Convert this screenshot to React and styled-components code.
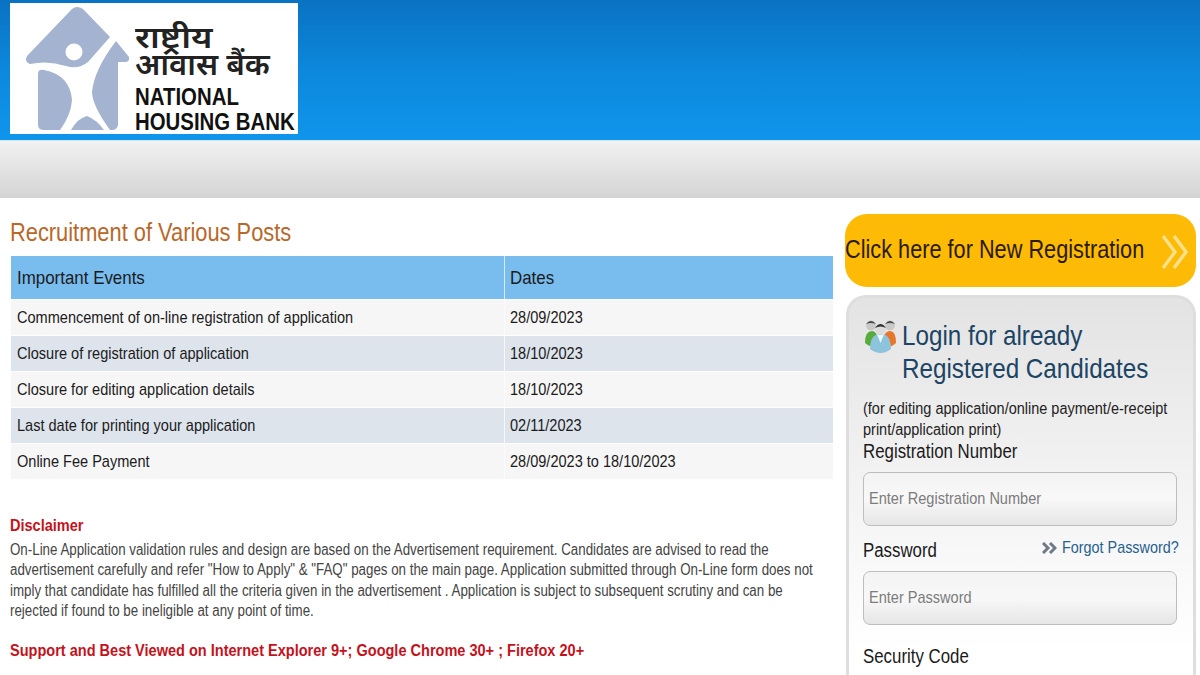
import React from "react";
import styled, { createGlobalStyle, css } from "styled-components";

const squeeze = (r) => css`
  white-space: nowrap; transform: scaleX(${r}); transform-origin: left center;
`;

const Global = createGlobalStyle`
  html, body { margin: 0; padding: 0; height: 675px; overflow: hidden; background: #fff; }
  body { font-family: "Liberation Sans", Arial, sans-serif; }
`;
const Page = styled.div`width: 1200px; height: 675px; overflow: hidden;`;
const Header = styled.header`
  height: 140px; box-sizing: border-box; padding: 3px 0 0 10px;
  background: linear-gradient(180deg, #0a72c2 0%, #0c88dc 50%, #0f95ec 100%);
`;
const LogoBox = styled.div`
  position: relative; width: 288px; height: 131px; background: #fff;
`;
const LogoMark = styled.svg`position: absolute; left: 0; top: 0;`;
const Hindi = styled.div`
  position: absolute; left: 125px; top: ${p => p.$top}px;
  font-family: "Noto Sans", "Noto Sans CJK SC", "DejaVu Sans", sans-serif; font-weight: 600;
  font-size: 31px; line-height: 27px; color: #222; ${p => squeeze(p.$r)}
`;
const LogoEn = styled.div`
  position: absolute; left: 125px; top: 81px; font-size: 24px; line-height: 25px; font-weight: 700;
  color: #111; ${squeeze(0.85)}
`;
const Band = styled.div`height: 58px; background: linear-gradient(180deg, #f1f1f1 0%, #d4d4d4 100%); border-top: 1px solid #cfe6f8; box-sizing: border-box;`;
const Main = styled.main`display: flex; height: 477px; overflow: hidden;`;
const Left = styled.section`width: 823px; margin-left: 10px; padding-top: 18px; box-sizing: border-box;`;
const Title = styled.h1`
  margin: 0; font-size: 26px; line-height: 32px; font-weight: 400; color: #b8682a; ${squeeze(0.84)}
`;
const Table = styled.div`margin: 8px 0 0 1px; width: 822px;`;
const Row = styled.div`
  display: grid; grid-template-columns: 492px 1fr; column-gap: 1px;
  height: ${p => p.$head ? 43 : 35}px; margin-bottom: 1px;
  background: ${p => p.$head ? "#79bcee" : p.$alt ? "#dde4ec" : "#f6f6f6"};
`;
const Cell = styled.div`
  display: flex; align-items: center; padding-left: ${p => p.$second ? 5 : 6}px; color: #1b1b1b;
  ${p => p.$head ? "background: #79bcee;" : ""}
  border-left: ${p => p.$second ? "1px solid rgba(255,255,255,.7)" : "none"};
`;
const CellText = styled.span`
  font-size: ${p => p.$head ? 19 : 17}px; ${p => squeeze(p.$head ? 0.89 : 0.855)}
`;
const Disclaimer = styled.div`margin-top: 37px;`;
const RedHead = styled.div`
  color: #c4121c; font-weight: 700; font-size: 16px; line-height: 20px; ${squeeze(0.908)}
`;
const Body = styled.p`
  margin: 4px 0 0; color: #444; font-size: 16px; line-height: 20.4px; ${squeeze(0.833)}
`;
const Support = styled(RedHead)`margin-top: 19px;`;
const Right = styled.aside`width: 351px; margin-left: 12px; padding-top: 16px; box-sizing: border-box;`;
const RegButton = styled.div`
  height: 73px; box-sizing: border-box; border-radius: 22px; background: #fdbb05; display: flex; align-items: center;
  padding: 0 8px 2px 0;
  svg { flex-shrink: 0; margin-top: 4px; }
`;
const RegLabel = styled.span`flex: 1; min-width: 0; font-size: 26px; color: #2a1a00; ${squeeze(0.835)}`;
const Panel = styled.div`
  margin-top: 8px; margin-left: 1px; height: 420px; box-sizing: border-box; border: 3px solid #dedede; border-bottom: none; border-radius: 20px 20px 0 0;
  padding: 21px 16px 0 14px;
  background: linear-gradient(180deg, #e3e3e3 0%, #f3f3f3 45%, #fff 85%);
`;
const LoginHead = styled.div`
  display: flex; gap: 5px; align-items: flex-start;
  svg { flex-shrink: 0; margin-left: 1px; }
`;
const LoginTitle = styled.h2`
  flex: 1; min-width: 0; margin: 0; font-size: 28px; line-height: 33px; font-weight: 400; color: #1c4464; ${squeeze(0.865)}
`;
const Note = styled.div`
  margin-top: 14px; font-size: 16px; line-height: 20.5px; color: #222; ${squeeze(0.905)}
`;
const Label = styled.div`
  font-size: 20px; line-height: 24px; color: #1a1a1a; margin-top: ${p => p.$top || 0}px; ${squeeze(0.842)}
`;
const Input = styled.div`
  margin-top: ${p => p.$top}px; width: 314px; height: 54px; box-sizing: border-box; border: 1px solid #bdbdbd; border-radius: 7px;
  background: linear-gradient(180deg, #f3f3f3 0%, #f8f8f8 50%, #e6e6e6 100%);
  display: flex; align-items: center; padding-left: 5px;
`;
const Placeholder = styled.span`color: #7c7c7c; font-size: 17px; ${squeeze(0.855)}`;
const PassRow = styled.div`display: flex; justify-content: space-between; align-items: center; margin-top: 12px; width: 317px;`;
const Forgot = styled.div`
  display: flex; align-items: center; gap: 5px; margin-top: -4px; width: 138px;
  svg { flex-shrink: 0; }
`;
const ForgotLabel = styled.span`flex: 1; min-width: 0; color: #27618e; font-size: 17px; ${squeeze(0.846)}`;

const Logo = () => (
  <LogoBox>
    <LogoMark width="288" height="131" viewBox="10 3 288 131">
      <g fill="#a3b3d0">
        <path d="M72 9Q77 5 83 9L110 37L88 62Q78 70 66 66Q48 60 30 64Q24 62 27 56Z" />
        <path d="M116 41L129 57Q130 62 125 62L118 62L118 125Q117 130 112 130L110 130Q92 105 92 92Q94 70 116 41Z" />
        <path d="M38 74Q38 69 44 70Q70 75 72 100Q71 115 60 130L44 130Q38 130 38 125Z" />
        <path d="M71 130Q78 118 87 116Q97 120 104 130Z" />
      </g>
      <circle cx="74" cy="52" r="8.5" fill="#fff" />
    </LogoMark>
    <Hindi $top={20} $r={1.13}>राष्ट्रीय</Hindi>
    <Hindi $top={47} $r={1}>आवास बैंक</Hindi>
    <LogoEn>NATIONAL<br />HOUSING BANK</LogoEn>
  </LogoBox>
);

const BigChevrons = () => (
  <svg width="26" height="34" viewBox="0 0 26 34" fill="none" stroke="#fde08a" strokeWidth="3.4">
    <path d="M1 1L13 17L1 33" /><path d="M12 1L24 17L12 33" />
  </svg>
);

const SmallChevrons = () => (
  <svg width="15" height="12" viewBox="0 0 15 12" fill="none" stroke="#6f7a84" strokeWidth="3">
    <path d="M1 1L6 6L1 11" /><path d="M8 1L13 6L8 11" />
  </svg>
);

const People = () => (
  <svg width="33" height="35" viewBox="0 0 33 35">
    <path d="M1 24Q1 12 8 12Q14 12 14 26Q8 30 1 24Z" fill="#58ab3c" />
    <path d="M19 26Q19 12 26 12Q32 12 32 24Q26 30 19 26Z" fill="#e8762a" />
    <circle cx="7" cy="6.5" r="5" fill="#c9c9c9" /><circle cx="26" cy="6.5" r="5" fill="#c9c9c9" />
    <path d="M2 5Q7 -1 12 5Q7 3 2 5Z" fill="#444" /><path d="M21 5Q26 -1 31 5Q26 3 21 5Z" fill="#444" />
    <circle cx="16.5" cy="10" r="5.5" fill="#dcdcdc" />
    <path d="M11 9Q16.5 1 22 9Q16.5 6 11 9Z" fill="#333" />
    <path d="M6 30Q6 15 16.5 15Q27 15 27 30Q16.5 38 6 30Z" fill="#8cc4dc" />
    <path d="M13 15.5L16.5 24L20 15.5Z" fill="#eef6fa" />
  </svg>
);

const rows = [
  ["Commencement of on-line registration of application", "28/09/2023"],
  ["Closure of registration of application", "18/10/2023"],
  ["Closure for editing application details", "18/10/2023"],
  ["Last date for printing your application", "02/11/2023"],
  ["Online Fee Payment", "28/09/2023 to 18/10/2023"],
];

export default function App() {
  return (
    <Page>
      <Global />
      <Header><Logo /></Header>
      <Band />
      <Main>
        <Left>
          <Title>Recruitment of Various Posts</Title>
          <Table>
            <Row $head>
              <Cell $head><CellText $head>Important Events</CellText></Cell>
              <Cell $head $second><CellText $head>Dates</CellText></Cell>
            </Row>
            {rows.map((r, i) => (
              <Row key={r[0]} $alt={i % 2 === 1}>
                <Cell><CellText>{r[0]}</CellText></Cell>
                <Cell $second><CellText>{r[1]}</CellText></Cell>
              </Row>
            ))}
          </Table>
          <Disclaimer>
            <RedHead>Disclaimer</RedHead>
            <Body>
              On-Line Application validation rules and design are based on the Advertisement requirement. Candidates are advised to read the<br />
              advertisement carefully and refer "How to Apply" &amp; "FAQ" pages on the main page. Application submitted through On-Line form does not<br />
              imply that candidate has fulfilled all the criteria given in the advertisement . Application is subject to subsequent scrutiny and can be<br />
              rejected if found to be ineligible at any point of time.
            </Body>
            <Support>Support and Best Viewed on Internet Explorer 9+; Google Chrome 30+ ; Firefox 20+</Support>
          </Disclaimer>
        </Left>
        <Right>
          <RegButton>
            <RegLabel>Click here for New Registration</RegLabel>
            <BigChevrons />
          </RegButton>
          <Panel>
            <LoginHead>
              <People />
              <LoginTitle>Login for already<br />Registered Candidates</LoginTitle>
            </LoginHead>
            <Note>(for editing application/online payment/e-receipt<br />print/application print)</Note>
            <Label $top={-1}>Registration Number</Label>
            <Input $top={9}>
              <Placeholder>Enter Registration Number</Placeholder>
            </Input>
            <PassRow>
              <Label>Password</Label>
              <Forgot>
                <SmallChevrons />
                <ForgotLabel>Forgot Password?</ForgotLabel>
              </Forgot>
            </PassRow>
            <Input $top={9}>
              <Placeholder>Enter Password</Placeholder>
            </Input>
            <Label $top={19}>Security Code</Label>
          </Panel>
        </Right>
      </Main>
    </Page>
  );
}
